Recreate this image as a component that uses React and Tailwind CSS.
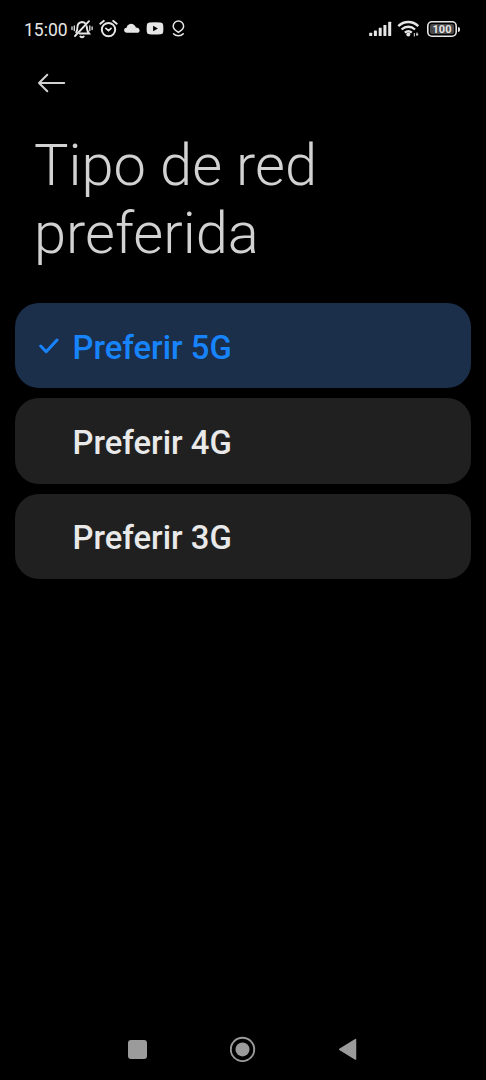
import React from 'react';

const options = ['Preferir 5G', 'Preferir 4G', 'Preferir 3G'];

function StatusIcons() {
  return (
    <div className="flex items-center">
      {/* muted bell */}
      <svg className="ml-[3px] h-5 w-[22px]" viewBox="0 0 22 20" fill="none" stroke="currentColor" strokeWidth="1.9" strokeLinecap="round">
        <path d="M5.2 13.2c1-1.1 1.1-1.9 1.1-4.2C6.3 5.8 8 3.3 11 3c1.4 0 2.5.5 3.2 1.3M15.7 7.2c.2 3.7.3 5.1 2.3 7.3H8.6" />
        <path d="M4 17 18 2.200" />
        <path d="M9.4 17.5c1 .8 2.3.8 3.3 0" />
        <path d="M3.3 6.9v4.6M1 8v2.5M18.8 6.9v4.6M21.1 8v2.5" strokeWidth="1.3" />
      </svg>
      {/* alarm */}
      <svg className="ml-1.5 h-5 w-[19px]" viewBox="0 0 19 20" fill="none" stroke="currentColor" strokeWidth="2" strokeLinecap="round">
        <circle cx="9.5" cy="10.6" r="6.7" />
        <path d="M1.3 4.7 4.7 1.9M14.3 1.9l3.4 2.8" />
        <path d="m6.9 9.3 2.6 2.3 2.6-2.3" strokeWidth="1.7" />
      </svg>
      {/* cloud */}
      <svg className="ml-1.5 h-5 w-4" viewBox="0 0 16 20" fill="currentColor">
        <path d="M2.7 13.7a2.5 2.5 0 0 1-.2-5A4.7 4.7 0 0 1 10.7 6.5c.6.8.9 1.4 1.2 2.1 2.1.1 3.7 1.1 3.7 2.8 0 1.4-1.1 2.3-2.6 2.3Z" />
      </svg>
      {/* video */}
      <svg className="ml-1.5 h-5 w-[18px]" viewBox="0 0 18 20" fill="currentColor">
        <path fillRule="evenodd" d="M3.4 3.6Q9 3 14.6 3.6 17 3.7 17.2 6q.3 3.6 0 6.9-.2 2.3-2.6 2.4-5.6.5-11.2 0Q1 15.2.8 12.9q-.3-3.3 0-6.9Q1 3.7 3.4 3.6ZM7.1 6.7v5.5l4.8-2.75Z" />
      </svg>
      {/* location */}
      <svg className="ml-[7px] h-5 w-[14px]" viewBox="0 0 14 20" fill="none" stroke="currentColor" strokeWidth="1.5" strokeLinecap="round">
        <path d="M7.4 13.3C4.4 11.5 2.2 9.6 2.2 7.2a5.2 5.2 0 0 1 10.4 0c0 2.4-2.2 4.3-5.2 6.1Z" />
        <path d="M2.5 14.700c2.3 2.7 7.5 2.7 9.8 0" />
      </svg>
    </div>
  );
}

function StatusBar() {
  return (
    <div className="flex h-[58px] items-center justify-between pr-[26px] pl-6 text-[#e6e6e6]">
      <div className="flex items-center">
        <span className="w-[44px] pt-px text-[17.5px] leading-5 whitespace-nowrap">15:00</span>
        <StatusIcons />
      </div>
      <div className="flex items-center">
        {/* signal */}
        <svg className="h-5 w-6" viewBox="0 0 24 20" fill="currentColor">
          <rect x="0.2" y="13.7" width="3" height="3.3" rx="0.6" />
          <rect x="4.9" y="11.5" width="3" height="5.5" rx="0.6" />
          <rect x="9.7" y="8.8" width="3" height="8.2" rx="0.6" />
          <rect x="14.4" y="5.9" width="3" height="11.1" rx="0.6" />
          <rect x="19.2" y="2.7" width="3" height="14.3" rx="0.6" />
        </svg>
        {/* wifi with data arrows */}
        <svg className="ml-1 h-5 w-6" viewBox="0 0 24 20" fill="none" stroke="currentColor" strokeWidth="2.3">
          <path d="M1.3 7.1c5.6-5.500 14.4-5.500 20 0" />
          <path d="M4.600 10.500c3.900-3.700 9.500-3.700 13.400 0" />
          <path d="M7.800 13.700c2.200-1.900 4.800-1.900 7 0" />
          <circle cx="11.3" cy="15.6" r="2" fill="currentColor" stroke="none" />
          <path d="M17.300 14v3.500M20 13.500V17M19 15.300h2.300" strokeWidth="1" />
        </svg>
        <div className="ml-1.5 flex items-center">
          <div className="flex h-4 w-[30px] items-center justify-center rounded-[5px] p-[3px] shadow-[inset_0_0_0_1.6px_#e6e6e6]">
            <span className="flex h-full w-full items-center justify-center rounded-[2px] bg-[#484848] text-[11px] leading-none font-bold">100</span>
          </div>
          <div className="ml-px h-[5px] w-[2px] rounded-r-full bg-[#e6e6e6]" />
        </div>
      </div>
    </div>
  );
}

function Option({ label, selected }) {
  return (
    <li
      className={`flex h-[85.4px] items-center rounded-[24px] pl-[22px] text-[32.8px] font-medium ${
        selected ? 'bg-[#1b2e4a] text-[#1784fc]' : 'bg-[#202020] text-[#e9e9e9]'
      }`}
    >
      <span className="w-[35.5px] shrink-0">
        {selected && (
          <svg className="h-[22px] w-[22px]" viewBox="0 0 22 22" fill="none" stroke="currentColor" strokeWidth="3" strokeLinecap="round" strokeLinejoin="round">
            <path d="m3.7 11 5.5 5.7L20 5" />
          </svg>
        )}
      </span>
      <span className="pt-1 leading-[38px] whitespace-nowrap">{label}</span>
    </li>
  );
}

export default function App() {
  return (
    <div className="flex h-[1080px] w-[486px] flex-col overflow-hidden bg-black font-[Roboto,sans-serif]">
      <StatusBar />
      <header className="pl-[34px] text-[#d2d2d2]">
        <button type="button" aria-label="Atrás" className="block pt-[14px]">
          <svg className="h-[22px] w-8" viewBox="0 0 32 22" fill="none" stroke="currentColor" strokeWidth="2" strokeLinecap="round" strokeLinejoin="round">
            <path d="M5 11h25.2M13.3 2.7 5 11l8.3 8.3" />
          </svg>
        </button>
        <h1 className="mt-[37px] text-[57.8px] leading-[68px] font-light">
          Tipo de red
          <br />
          preferida
        </h1>
      </header>
      <ul className="mt-9 flex flex-col gap-2.5 px-[15px]">
        {options.map((label, i) => (
          <Option key={label} label={label} selected={i === 0} />
        ))}
      </ul>
      <nav className="mt-auto flex h-[62px] items-center pl-[128px] text-[#9b9b9b]">
        <div className="h-[19px] w-[19px] rounded-[3px] bg-current" />
        <svg className="ml-[83px] h-[26px] w-[26px]" viewBox="0 0 26 26">
          <circle cx="12.5" cy="13.4" r="11.7" fill="none" stroke="currentColor" strokeWidth="1.9" />
          <circle cx="12.5" cy="13.4" r="7" fill="currentColor" />
        </svg>
        <svg className="ml-[82px] h-[22px] w-[19px]" viewBox="0 0 19 22" fill="currentColor" stroke="currentColor" strokeWidth="1.5" strokeLinejoin="round">
          <path d="M1.7 11.3 17.5 1.6v19.4Z" />
        </svg>
      </nav>
    </div>
  );
}
